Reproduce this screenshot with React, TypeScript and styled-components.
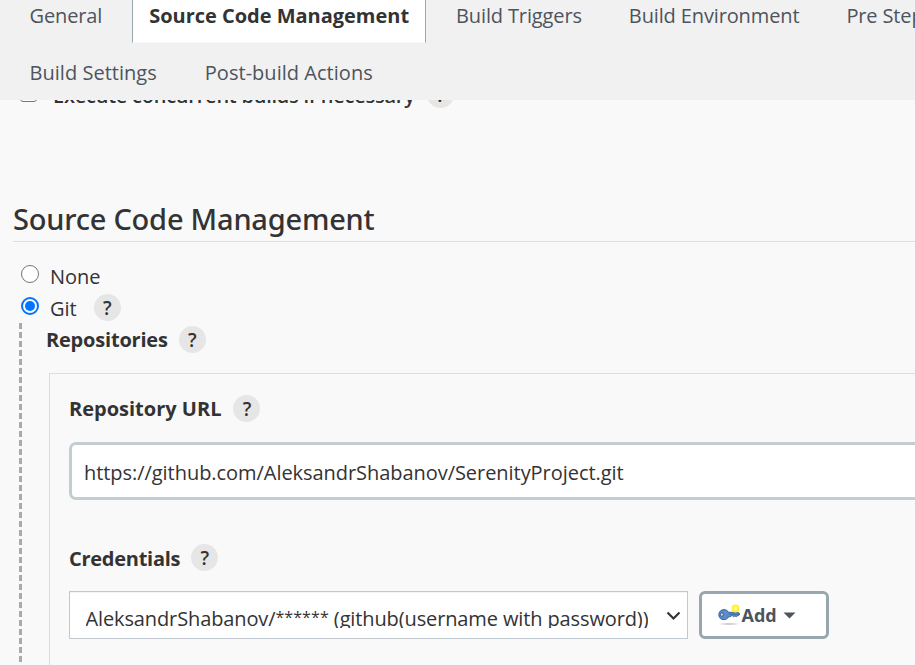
import React from 'react';
import styled, { createGlobalStyle } from 'styled-components';

const GlobalStyle = createGlobalStyle`
  *, *::before, *::after { box-sizing: border-box; }
  body {
    margin: 0;
    background: #f9f9f9;
    color: #333;
    font: 400 20px/26px 'Open Sans', 'Noto Sans', sans-serif;
    overflow: hidden;
  }
`;

const Page = styled.div`
  width: 915px;
  height: 665px;
  overflow: hidden;
  display: flex;
  flex-direction: column;
`;

const TabBar = styled.nav`
  flex: none;
  height: 100px;
  padding-left: 12.500px;
  background: #f1f1f1;
  display: flex;
  flex-direction: column;
  gap: 14px;
`;

const TabRow = styled.div<{ $tracking: number; $gap: number }>`
  display: flex;
  gap: ${p => p.$gap}px;
  height: 43px;
  letter-spacing: ${p => p.$tracking}px;
`;

const Tab = styled.a<{ $active?: boolean }>`
  flex: none;
  height: 43px;
  padding: 3px 16px 0;
  white-space: nowrap;
  border: solid ${p => (p.$active ? '#98a6ae' : 'transparent')};
  border-width: 0 1px;
  border-bottom: ${p => (p.$active ? '1px solid #f8f8f8' : 'none')};
  background: ${p => (p.$active ? '#fff' : 'transparent')};
  color: ${p => (p.$active ? '#333' : '#4d545d')};
  font-weight: ${p => (p.$active ? 700 : 400)};
  letter-spacing: ${p => (p.$active ? '-0.02px' : 'inherit')};
`;

const Content = styled.main`
  flex: 1;
  min-height: 0;
  overflow: hidden;
  display: flex;
  flex-direction: column;
`;

const ConcurrentRow = styled.div`
  flex: none;
  display: flex;
  align-items: flex-start;
  height: 27px;
  margin-top: -19px;
  padding-left: 20px;
`;

const Checkbox = styled.span`
  flex: none;
  width: 17px;
  height: 17px;
  margin: 4px 16px 0 0;
  border: 1px solid #767676;
  border-radius: 3px;
  background: #fff;
`;

const BoldText = styled.span<{ $tracking?: number; $weight?: number; $width?: number; $top?: number }>`
  flex: none;
  width: ${p => (p.$width ? `${p.$width}px` : 'auto')};
  padding-top: ${p => p.$top ?? 1}px;
  font-weight: ${p => p.$weight ?? 700};
  white-space: nowrap;
  letter-spacing: ${p => p.$tracking ?? 0}px;
`;

const Help = styled.span<{ $gap: number }>`
  flex: none;
  width: 27px;
  height: 27px;
  margin-left: ${p => p.$gap}px;
  border-radius: 50%;
  background: #e6e6e6;
  text-align: center;
  font-size: 19px;
  line-height: 28px;
  font-weight: 600;
`;

const Heading = styled.h2`
  flex: none;
  height: 43px;
  margin: 91px 0 0 13px;
  border-bottom: 1px solid #dedede;
  font: 500 29px/40px 'Noto Sans', sans-serif;
  letter-spacing: -0.22px;
`;

const Options = styled.div`
  flex: none;
  display: flex;
  flex-direction: column;
  gap: 5px;
  padding: 20px 0 0 21px;
`;

const Option = styled.label`
  display: flex;
  height: 27px;
  align-items: flex-start;
`;

const Radio = styled.span<{ $checked?: boolean }>`
  flex: none;
  display: grid;
  place-items: center;
  width: 18px;
  height: 18px;
  margin: 3px 11px 0 0;
  border-radius: 50%;
  border: ${p => (p.$checked ? '2px solid #0075ff' : '1.5px solid #767676')};
  background: #fff;

  &::after {
    content: '';
    width: 10px;
    height: 10px;
    border-radius: 50%;
    background: ${p => (p.$checked ? '#0075ff' : 'transparent')};
  }
`;

const OptionText = styled.span`
  padding-top: 2px;
`;

const Nested = styled.section`
  flex: 1;
  min-height: 0;
  margin: 2px 0 0 19px;
  display: flex;
`;

const DashedRule = styled.div`
  flex: none;
  width: 3px;
  background: repeating-linear-gradient(#aaa 0 6px, transparent 6px 9px);
`;

const NestedBody = styled.div`
  flex: 1;
  min-width: 0;
  padding: 3px 0 0 24px;
`;

const FieldLabel = styled.div`
  display: flex;
  height: 27px;
`;

const Panel = styled.div`
  width: 900px;
  height: 400px;
  margin: 20px 0 0 3px;
  padding: 21px 0 0 19px;
  border: 1px solid #ddd;
`;

const UrlInput = styled.div`
  height: 58px;
  margin: 20px 0 44px;
  padding: 15px 0 0 12px;
  border: 3px solid #c3cdd1;
  border-radius: 7px;
  background: #fff;
  letter-spacing: -0.05px;
`;

const Controls = styled.div`
  display: flex;
  gap: 11px;
  margin-top: 20px;
`;

const Select = styled.div`
  display: flex;
  justify-content: space-between;
  width: 619px;
  height: 48px;
  padding: 14px 6px 0 15.500px;
  border: 1px solid #bfc9cf;
  background: #fff;
  box-shadow: inset 0 1px 1px #0000000d;
`;

const SelectValue = styled.span`
  height: 22px;
  overflow: hidden;
  white-space: nowrap;
  letter-spacing: -0.12px;
`;

const Mask = styled.span`
  font-size: 16px;
  line-height: 16px;
  vertical-align: 3px;
  letter-spacing: 0.08px;
`;

const Chevron = styled.svg`
  flex: none;
  width: 15px;
  height: 10px;
  margin-top: 5px;
`;

const AddButton = styled.button`
  display: flex;
  align-items: flex-start;
  width: 130px;
  height: 48px;
  padding: 8px 0 0 15.500px;
  border: 3px solid #98a6ae;
  border-radius: 6px;
  background: #fff;
  color: #4d545d;
  font: 700 18px/26px 'Open Sans', sans-serif;
`;

const KeyDrawing = styled.svg`
  flex: none;
  width: 24px;
  height: 24px;
  margin-top: 2px;
`;

const Caret = styled.svg`
  width: 13px;
  height: 7px;
  margin: 10px 0 0 6.500px;
`;

const HelpBadge = ({ gap }: { gap: number }) => <Help $gap={gap}>?</Help>;

const KeyIcon = () => (
  <KeyDrawing viewBox="0 0 24 24">
    <defs>
      <radialGradient id="shadow">
        <stop offset="0" stopColor="#000" stopOpacity=".28" />
        <stop offset="1" stopColor="#000" stopOpacity="0" />
      </radialGradient>
    </defs>
    <ellipse cx="11" cy="20" rx="11" ry="1.5" fill="url(#shadow)" />
    <path
      d="M6 5.600c2 0 3.700 1 4.500 2.700h9.600l1.900 1.700-1.700 1.800h-1.300l-.8 1-1.300-1-1.200 1-1.200-1h-1.300l-1 1h-1.600c-.9 1.800-2.600 2.900-4.600 2.900C3 15.700.8 13.600.8 10.700S3 5.600 6 5.600z"
      fill="#5b8ccb"
      stroke="#2f5c9b"
      strokeWidth=".9"
    />
    <path d="M11 10.200h9.500" stroke="#2f5c9b" strokeWidth=".8" />
    <ellipse cx="3.900" cy="10.600" rx="1.300" ry="1.900" fill="#e8eef6" stroke="#24466f" strokeWidth=".8" />
    <circle cx="17.500" cy="4.500" r="2.700" fill="#fffbb0" stroke="#fff23a" strokeWidth="2.600" />
  </KeyDrawing>
);

export default function App() {
  return (
    <Page>
      <GlobalStyle />
      <TabBar>
        <TabRow $tracking={-0.13} $gap={13}>
          <Tab>General</Tab>
          <Tab $active>Source Code Management</Tab>
          <Tab>Build Triggers</Tab>
          <Tab>Build Environment</Tab>
          <Tab>Pre Steps</Tab>
        </TabRow>
        <TabRow $tracking={0.03} $gap={14}>
          <Tab>Build Settings</Tab>
          <Tab>Post-build Actions</Tab>
        </TabRow>
      </TabBar>
      <Content>
        <ConcurrentRow>
          <Checkbox />
          <BoldText $tracking={-0.24} $weight={600} $width={362} $top={2}>
            Execute concurrent builds if necessary
          </BoldText>
          <HelpBadge gap={12} />
        </ConcurrentRow>
        <Heading>Source Code Management</Heading>
        <Options>
          <Option>
            <Radio />
            <OptionText>None</OptionText>
          </Option>
          <Option>
            <Radio $checked />
            <OptionText>Git</OptionText>
            <HelpBadge gap={17} />
          </Option>
        </Options>
        <Nested>
          <DashedRule />
          <NestedBody>
            <FieldLabel>
              <BoldText $tracking={-0.2}>Repositories</BoldText>
              <HelpBadge gap={11} />
            </FieldLabel>
            <Panel>
              <FieldLabel>
                <BoldText>Repository URL</BoldText>
                <HelpBadge gap={12} />
              </FieldLabel>
              <UrlInput>https://github.com/AleksandrShabanov/SerenityProject.git</UrlInput>
              <FieldLabel>
                <BoldText $tracking={-0.27} $top={2}>Credentials</BoldText>
                <HelpBadge gap={11} />
              </FieldLabel>
              <Controls>
                <Select>
                  <SelectValue>
                    AleksandrShabanov/<Mask>******</Mask> (github(username with password))
                  </SelectValue>
                  <Chevron viewBox="0 0 15 10">
                    <path d="M1.500 1.500l6 6 6-6" fill="none" stroke="#333" strokeWidth="2.200" />
                  </Chevron>
                </Select>
                <AddButton>
                  <KeyIcon />
                  Add
                  <Caret viewBox="0 0 13 7">
                    <path d="M.5.500h12L6.500 6.500z" fill="#4d545d" />
                  </Caret>
                </AddButton>
              </Controls>
            </Panel>
          </NestedBody>
        </Nested>
      </Content>
    </Page>
  );
}
